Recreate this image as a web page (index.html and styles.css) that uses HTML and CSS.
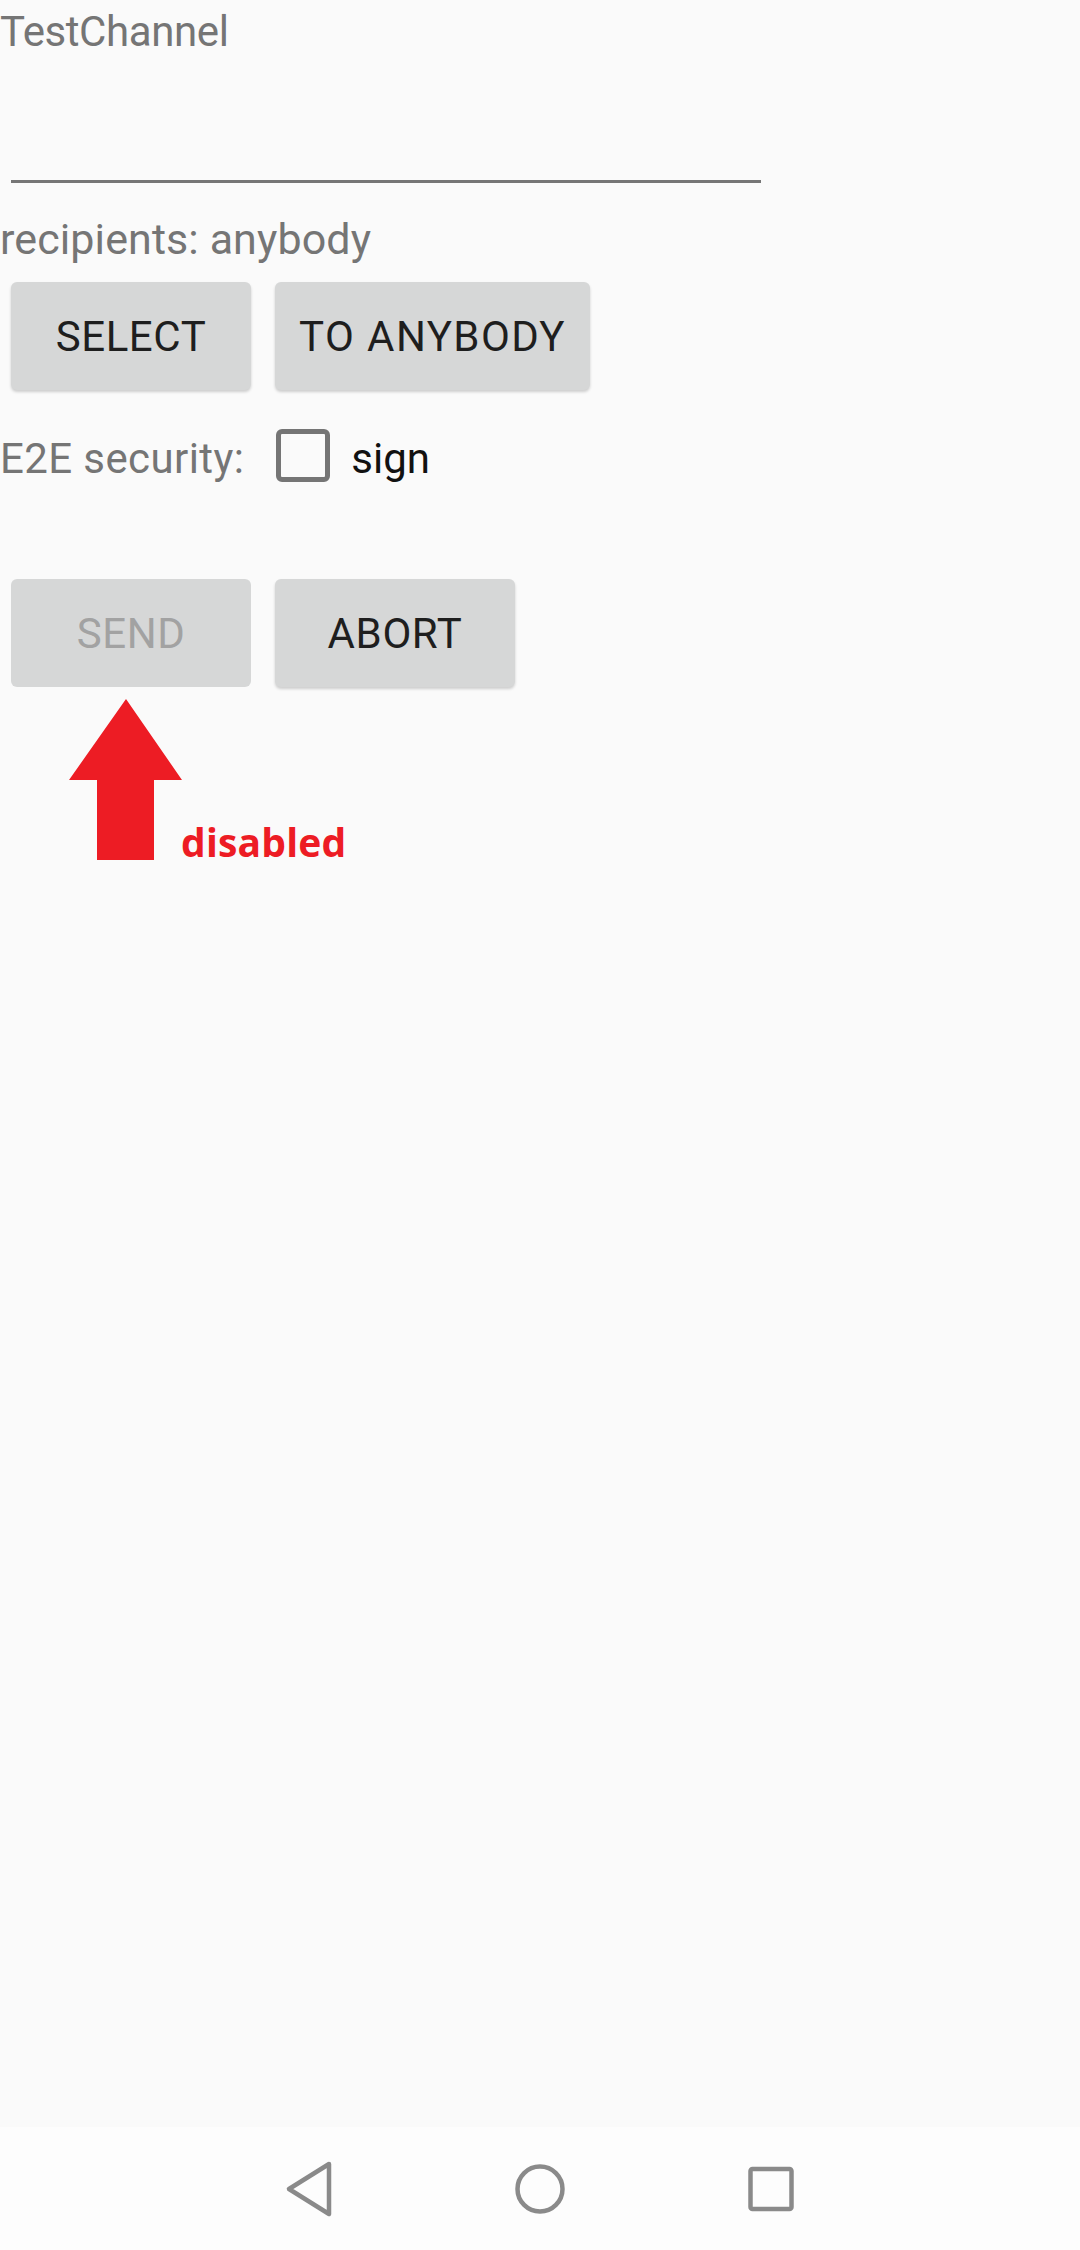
FILE: index.html
```html
<!DOCTYPE html>
<html>
<head>
<meta charset="utf-8">
<link rel="stylesheet" href="styles.css">
</head>
<body>
<div class="screen">
  <main class="content">
    <div class="title">TestChannel</div>
    <div class="edit"></div>
    <div class="recipients">recipients: anybody</div>
    <div class="btn-row">
      <div class="btn btn-select">SELECT</div>
      <div class="btn btn-anybody">TO ANYBODY</div>
    </div>
    <div class="sec-row">
      <span class="sec-label">E2E security:</span>
      <span class="checkbox"></span>
      <span class="sign">sign</span>
    </div>
    <div class="btn-row btn-row2">
      <div class="btn btn-send disabled">SEND</div>
      <div class="btn btn-abort">ABORT</div>
    </div>
    <div class="annot">
      <svg class="arrow" width="113" height="161" viewBox="0 0 113 161">
        <polygon points="57,0 113,81 85,81 85,161 28,161 28,81 0,81" fill="#ed1c24"/>
      </svg>
      <span class="annot-text">disabled</span>
    </div>
  </main>
  <nav class="navbar">
    <svg class="nav-icon" width="60" height="60" viewBox="0 0 60 60">
      <path d="M50 5 L10 30 L50 55 Z" fill="none" stroke="#8a8a8a" stroke-width="4.5" stroke-linejoin="round"/>
    </svg>
    <svg class="nav-icon" width="60" height="60" viewBox="0 0 60 60">
      <circle cx="30" cy="30" r="22.5" fill="none" stroke="#8a8a8a" stroke-width="4.5"/>
    </svg>
    <svg class="nav-icon" width="60" height="60" viewBox="0 0 60 60">
      <rect x="9.5" y="10" width="41" height="40" rx="2" fill="none" stroke="#8a8a8a" stroke-width="4.5"/>
    </svg>
  </nav>
</div>
</body>
</html>
```

FILE: styles.css
```css
html, body {
  margin: 0;
  padding: 0;
  background: #fafafa;
}
body {
  font-family: Roboto, "Noto Sans", sans-serif;
}
.screen {
  width: 1080px;
  height: 2250px;
  display: flex;
  flex-direction: column;
  overflow: hidden;
}
.content {
  flex: 1;
  display: flex;
  flex-direction: column;
  align-items: flex-start;
}
.title {
  font-size: 42px;
  letter-spacing: -0.4px;
  line-height: 64px;
  height: 64px;
  color: #757575;
}
.edit {
  margin-left: 11px;
  width: 750px;
  height: 116px;
  border-bottom: 3px solid #767676;
}
.recipients {
  font-size: 43px;
  letter-spacing: 0.1px;
  line-height: 70px;
  padding-top: 21px;
  color: #757575;
}
.btn-row {
  display: flex;
  gap: 24px;
  margin-left: 11px;
  margin-top: 8px;
}
.btn {
  height: 108px;
  display: flex;
  align-items: center;
  justify-content: center;
  background: #d6d7d7;
  border-radius: 6px;
  font-size: 42px;
  letter-spacing: 0.6px;
  color: #1e1e1e;
  box-shadow: 0 2px 3px rgba(0,0,0,0.18);
}
.btn-select { width: 240px; }
.btn-anybody { width: 315px; letter-spacing: 1.4px; }
.btn-send { width: 240px; }
.btn-abort { width: 240px; }
.btn.disabled {
  color: #a2a2a2;
  box-shadow: none;
}
.sec-row {
  display: flex;
  align-items: center;
  height: 84px;
  margin-top: 24px;
}
.sec-label {
  font-size: 42px;
  letter-spacing: 0.4px;
  line-height: 84px;
  color: #757575;
  margin-top: 5px;
}
.checkbox {
  width: 44px;
  height: 43px;
  border: 5px solid #757575;
  border-radius: 6px;
  margin-left: 32px;
  margin-top: -2px;
}
.sign {
  font-size: 42px;
  line-height: 84px;
  color: #111;
  margin-left: 21px;
  margin-top: 5px;
}
.btn-row2 {
  margin-top: 81px;
}
.annot {
  display: flex;
  align-items: flex-end;
  margin-top: 12px;
  margin-left: 69px;
}
.arrow {
  display: block;
}
.annot-text {
  font-family: "Open Sans", sans-serif;
  font-weight: bold;
  font-size: 39px;
  letter-spacing: 0.2px;
  line-height: 39px;
  color: #ed1c24;
  margin-left: -1px;
  margin-bottom: -1px;
}
.navbar {
  height: 123px;
  background: #fdfdfd;
  display: flex;
  align-items: center;
  justify-content: center;
  gap: 171px;
}
.nav-icon {
  display: block;
}
```
